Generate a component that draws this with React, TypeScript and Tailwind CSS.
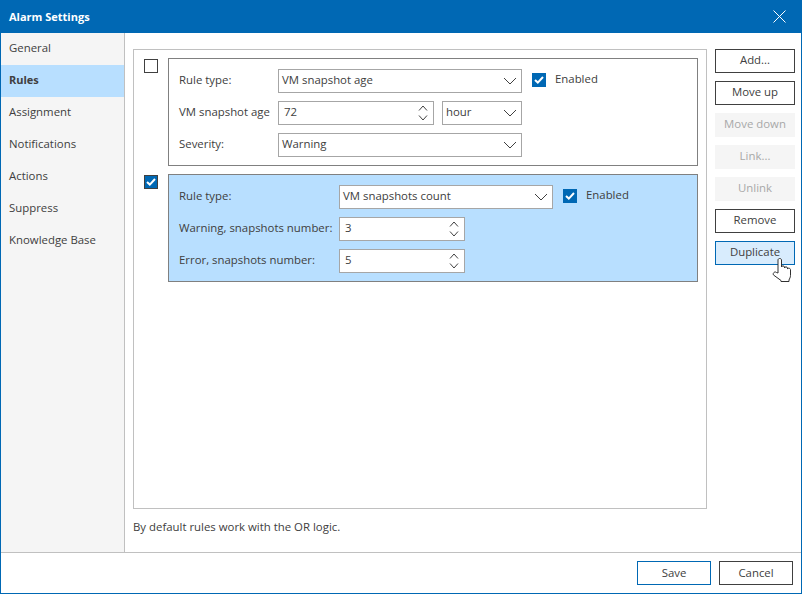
import React from "react";

function Chevron() {
  return (
    <svg width="14" height="8" viewBox="0 0 14 8" fill="none" stroke="#404040" strokeWidth="1">
      <path d="M1 1l6 6 6-6" />
    </svg>
  );
}

function Spin() {
  return (
    <div className="flex flex-col gap-[4px] mr-[5px]">
      <svg width="10" height="6" viewBox="0 0 10 6" fill="none" stroke="#404040"><path d="M1 5.5l4-4.5 4 4.5" /></svg>
      <svg width="10" height="6" viewBox="0 0 10 6" fill="none" stroke="#404040"><path d="M1 .5l4 4.5 4-4.5" /></svg>
    </div>
  );
}

function Select({ value, w }: { value: string; w: string }) {
  return (
    <div className={`${w} h-6 bg-white border border-[#a6a6a6] flex items-center justify-between pl-[3px] pr-[4px]`}>
      <span className="mb-[2px]">{value}</span>
      <Chevron />
    </div>
  );
}

function NumberBox({ value, w }: { value: string; w: string }) {
  return (
    <div className={`${w} h-6 bg-white border border-[#a6a6a6] flex items-center justify-between pl-[5px]`}>
      <span className="mb-[2px]">{value}</span>
      <Spin />
    </div>
  );
}

function Check({ checked, outlined }: { checked: boolean; outlined?: boolean }) {
  return (
    <div
      className={`w-[14px] h-[14px] shrink-0 flex items-center justify-center border ${
        checked ? (outlined ? "bg-[#0068b4] border-[#404040]" : "bg-[#0068b4] border-[#0068b4]") : "bg-white border-[#404040]"
      }`}
    >
      {checked && (
        <svg width="10" height="8" viewBox="0 0 10 8" fill="none" stroke="#fff" strokeWidth="2">
          <path d="M1 4l2.8 2.6L9 1" />
        </svg>
      )}
    </div>
  );
}

function Enabled() {
  return (
    <div className="flex items-center gap-[9px] ml-[10px] -mt-[3px]">
      <Check checked />
      <span className="mb-[2px]">Enabled</span>
    </div>
  );
}

function Label({ text, w }: { text: string; w: string }) {
  return <span className={`${w} shrink-0 whitespace-nowrap mb-[2px]`}>{text}</span>;
}

function Btn({ label, kind = "normal" }: { label: string; kind?: "normal" | "disabled" | "hover" }) {
  const cls =
    kind === "disabled"
      ? "bg-[#f5f5f5] text-[#a8a8a8]"
      : kind === "hover"
      ? "bg-[#d8ecfd] border border-[#0068b4]"
      : "bg-white border border-[#404040]";
  return (
    <div className={`w-20 h-6 flex items-center justify-center ${cls}`}>
      <span className="mb-[2px]">{label}</span>
    </div>
  );
}

const nav = ["General", "Rules", "Assignment", "Notifications", "Actions", "Suppress", "Knowledge Base"];

export default function App() {
  return (
    <div className="relative w-[802px] h-[594px] flex flex-col bg-white border border-t-0 border-[#0068b4] text-[#404040] text-[11.4px] leading-4 font-['Open_Sans','Noto_Sans',sans-serif] overflow-hidden">
      <div className="h-[33px] shrink-0 -mx-px bg-[#0068b4] flex items-center justify-between pl-[9px] pr-[16px] text-white text-[11px] font-bold">
        <span>Alarm Settings</span>
        <svg width="13" height="13" viewBox="0 0 13 13" stroke="#fff" strokeWidth="1" fill="none">
          <path d="M.5.5l12 12M12.5.5l-12 12" />
        </svg>
      </div>
      <div className="flex flex-1 min-h-0">
        <div className="w-[124px] shrink-0 bg-[#f5f5f5] border-r border-[#c0c0c0]">
          {nav.map((n) => (
            <div
              key={n}
              className={`h-8 flex items-center pl-2 ${n === "Rules" ? "bg-[#b8dfff] font-bold text-[11px]" : ""}`}
            >
              <span className="mb-[2px]">{n}</span>
            </div>
          ))}
        </div>
        <div className="flex-1 flex flex-col min-w-0">
          <div className="flex-1 flex pl-2 pt-4 pr-[6px] gap-2 min-h-0">
            <div className="flex flex-col w-[574px]">
              <div className="h-[460px] border border-[#c0c0c0] flex flex-col gap-2 pt-2 pl-[10px] pr-2">
                <div className="flex gap-[10px]">
                  <div className="pt-px"><Check checked={false} /></div>
                  <div className="flex-1 h-[108px] border border-[#808080] pt-[10px] pl-[10px] flex flex-col gap-2">
                    <div className="flex items-center">
                      <Label text="Rule type:" w="w-[99px]" />
                      <Select value="VM snapshot age" w="w-[244px]" />
                      <Enabled />
                    </div>
                    <div className="flex items-center">
                      <Label text="VM snapshot age" w="w-[99px]" />
                      <NumberBox value="72" w="w-[156px]" />
                      <div className="ml-2"><Select value="hour" w="w-20" /></div>
                    </div>
                    <div className="flex items-center">
                      <Label text="Severity:" w="w-[99px]" />
                      <Select value="Warning" w="w-[244px]" />
                    </div>
                  </div>
                </div>
                <div className="flex gap-[10px]">
                  <div className="pt-px"><Check checked outlined /></div>
                  <div className="flex-1 h-[108px] border border-[#808080] bg-[#b8dfff] pt-[10px] pl-[10px] flex flex-col gap-2">
                    <div className="flex items-center">
                      <Label text="Rule type:" w="w-[160px]" />
                      <Select value="VM snapshots count" w="w-[214px]" />
                      <Enabled />
                    </div>
                    <div className="flex items-center">
                      <Label text="Warning, snapshots number:" w="w-[160px]" />
                      <NumberBox value="3" w="w-[126px]" />
                    </div>
                    <div className="flex items-center">
                      <Label text="Error, snapshots number:" w="w-[160px]" />
                      <NumberBox value="5" w="w-[126px]" />
                    </div>
                  </div>
                </div>
              </div>
              <div className="mt-[10px]">By default rules work with the OR logic.</div>
            </div>
            <div className="flex flex-col gap-2">
              <Btn label="Add..." />
              <Btn label="Move up" />
              <Btn label="Move down" kind="disabled" />
              <Btn label="Link..." kind="disabled" />
              <Btn label="Unlink" kind="disabled" />
              <Btn label="Remove" />
              <Btn label="Duplicate" kind="hover" />
            </div>
          </div>
        </div>
      </div>
      <div className="h-[41px] shrink-0 border-t border-[#c0c0c0] flex justify-end gap-2 pt-2 pr-2">
        <div className="w-[74px] h-6 border border-[#0068b4] flex items-center justify-center">Save</div>
        <div className="w-[74px] h-6 border border-[#404040] flex items-center justify-center">Cancel</div>
      </div>
      <svg className="absolute left-[771px] top-[258px]" width="20" height="26" viewBox="0 0 20 26" fill="#fff" stroke="#303030" strokeWidth="1" strokeLinejoin="round">
        <path d="M6 15V2c0-2 3.5-2 3.5 0v7c0-1.5 3-1.5 3 0v1c0-1.5 3-1.5 3 0v1c0-1.3 3-1 3 .5v6c0 2-1 3-1.5 4.5v1.5h-8v-1L1.5 17c-1.2-2 1.5-4 3-2.5z" />
      </svg>
    </div>
  );
}
